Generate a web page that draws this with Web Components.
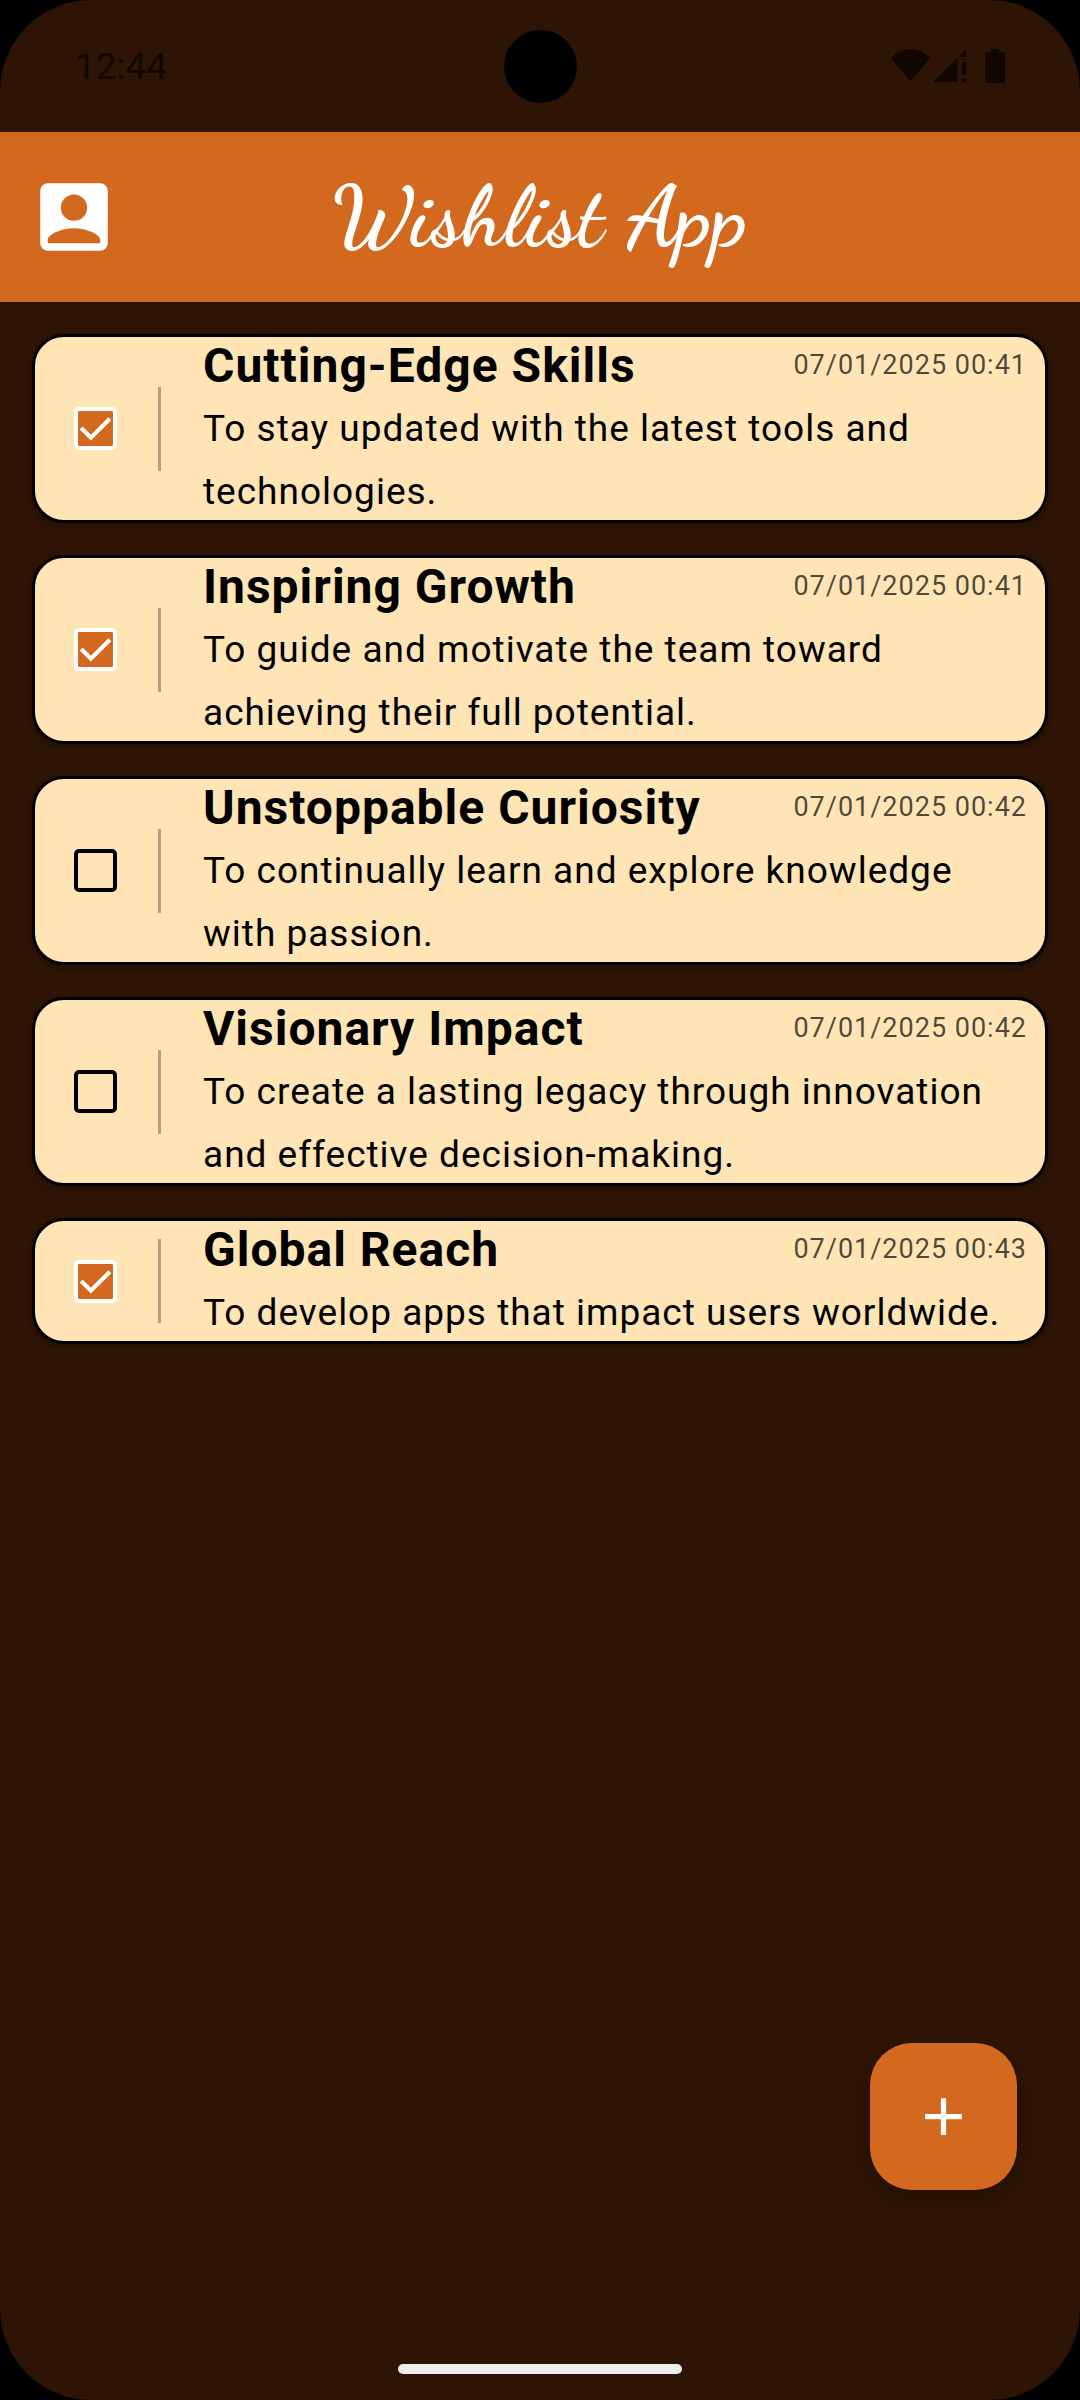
<!DOCTYPE html>
<html lang="en">
<head>
<meta charset="utf-8">
<meta name="viewport" content="width=device-width, initial-scale=1">
<title>Wishlist App</title>
<style>
  :root {
    --bg: #2d1404;
    --accent: #d2691e;
    --card: #ffe4b5;
    --status: #120700;
    --tracking: 1px;
  }
  html { background: #000; }
  body { margin: 0; font-family: Roboto, sans-serif; color: #000; }
</style>
</head>
<body>
<phone-screen>
  <status-bar slot="top">12:44</status-bar>
  <app-header slot="top">Wishlist App</app-header>
  <wish-list>
    <wish-card heading="Cutting-Edge Skills" date="07/01/2025 00:41" checked>To stay updated with the latest tools and technologies.</wish-card>
    <wish-card heading="Inspiring Growth" date="07/01/2025 00:41" checked>To guide and motivate the team toward achieving their full potential.</wish-card>
    <wish-card heading="Unstoppable Curiosity" date="07/01/2025 00:42">To continually learn and explore knowledge with passion.</wish-card>
    <wish-card heading="Visionary Impact" date="07/01/2025 00:42">To create a lasting legacy through innovation and effective decision-making.</wish-card>
    <wish-card heading="Global Reach" date="07/01/2025 00:43" checked>To develop apps that impact users worldwide.</wish-card>
  </wish-list>
  <add-button slot="bottom"></add-button>
  <nav-pill slot="bottom"></nav-pill>
</phone-screen>

<script>
class BaseElement extends HTMLElement {
  connectedCallback() {
    if (this.shadowRoot) return;
    this.attachShadow({ mode: 'open' }).innerHTML = this.render();
  }
}

customElements.define('phone-screen', class extends BaseElement {
  render() {
    return `
      <style>
        :host { display: flex; flex-direction: column; min-height: 100vh; background: var(--bg); border-radius: 91px; overflow: hidden; }
        main { flex: 1; }
        footer { display: flex; flex-direction: column; }
      </style>
      <slot name="top"></slot>
      <main><slot></slot></main>
      <footer><slot name="bottom"></slot></footer>`;
  }
});

customElements.define('status-bar', class extends BaseElement {
  render() {
    return `
      <style>
        :host { display: grid; grid-template-columns: 1fr auto 1fr; align-items: center; height: 132px; padding: 0 75px; color: var(--status); font-size: 37px; box-sizing: border-box; }
        .camera { width: 73px; height: 73px; border-radius: 50%; background: #000; }
        .icons { justify-self: end; display: flex; align-items: center; fill: currentColor; }
        svg { display: block; }
      </style>
      <time><slot></slot></time>
      <span class="camera"></span>
      <span class="icons">
        <svg width="114" height="34" viewBox="0 0 114 34" aria-hidden="true">
          <path d="M0 9 Q9 0 19.500 0 Q30 0 39 9 L19.500 32.500 Z"/>
          <path d="M42 33 L66.500 9 V33 Z M67.500 8 L75 .500 V8 Z M71 13 H75 V26 H71 Z M71 29.500 H75 V33 H71 Z"/>
          <path d="M100 0 H108 V3 H112 Q114 3 114 5 V32 Q114 34 112 34 H96 Q94 34 94 32 V5 Q94 3 96 3 H100 Z"/>
        </svg>
      </span>`;
  }
});

customElements.define('app-header', class extends BaseElement {
  render() {
    return `
      <style>
        :host { display: grid; grid-template-columns: 1fr auto 1fr; align-items: center; height: 170px; padding: 0 29px; background: var(--accent); color: #fff; box-sizing: border-box; }
        button { width: 90px; height: 90px; padding: 0; border: 0; background: none; color: inherit; }
        svg { display: block; width: 90px; height: 90px; fill: currentColor; }
        h1 { margin: 0; font: 700 84px "Dancing Script", cursive; letter-spacing: var(--tracking); white-space: nowrap; }
      </style>
      <button type="button" aria-label="Account">
        <svg viewBox="0 0 24 24" aria-hidden="true"><path fill-rule="evenodd" d="M5 3h14a2 2 0 0 1 2 2v14a2 2 0 0 1-2 2H5a2 2 0 0 1-2-2V5a2 2 0 0 1 2-2zM12 6a3.500 3.500 0 1 0 0 7a3.500 3.500 0 0 0 0-7zM5 18.100C5 16.600 8.800 15 12 15s7 1.600 7 3.100V19H5z"/></svg>
      </button>
      <h1><slot></slot></h1>`;
  }
});

customElements.define('wish-list', class extends BaseElement {
  render() {
    return `
      <style>:host { display: flex; flex-direction: column; gap: 32px; padding: 32px; }</style>
      <slot></slot>`;
  }
});

let nextId = 0;
customElements.define('wish-card', class extends BaseElement {
  render() {
    const id = 'wish' + nextId++;
    return `
      <style>
        :host { display: block; }
        article { display: flex; align-items: center; padding: 0 18px 0 0; border: 3px solid #000; border-radius: 32px; background: var(--card); box-shadow: 0 3px 6px rgba(0,0,0,.2); }
        .tick { display: grid; place-items: center; flex: none; width: 121px; align-self: stretch; }
        .tick > * { grid-area: 1 / 1; }
        input { appearance: none; width: 43px; height: 43px; margin: 0; border: 4px solid #000; border-radius: 5px; }
        input:checked { border-color: #fff; background: var(--accent); background-clip: padding-box; }
        svg { width: 43px; height: 43px; fill: none; stroke: #fff; stroke-width: 4; pointer-events: none; visibility: hidden; }
        input:checked + svg { visibility: visible; }
        .rule { flex: none; width: 3px; height: 84px; margin-left: 2px; background: rgba(0,0,0,.3); }
        .text { flex: 1; min-width: 0; margin: -3px 0 -3px 42px; letter-spacing: var(--tracking); line-height: 63px; }
        .top { display: flex; justify-content: space-between; align-items: center; gap: 16px; }
        h2 { margin: 0; font-size: 48px; font-weight: 700; line-height: inherit; }
        h2 label { display: block; }
        time { font-size: 27px; color: rgba(0,0,0,.7); white-space: nowrap; }
        p { margin: 0; font-size: 37px; }
      </style>
      <article>
        <span class="tick">
          <input type="checkbox" id="${id}"${this.hasAttribute('checked') ? ' checked' : ''}>
          <svg viewBox="0 0 42 42" aria-hidden="true"><path d="M7 20.500 L16.500 30 L35 11.500"/></svg>
        </span>
        <span class="rule"></span>
        <div class="text">
          <div class="top">
            <h2><label for="${id}">${this.getAttribute('heading')}</label></h2>
            <time>${this.getAttribute('date')}</time>
          </div>
          <p><slot></slot></p>
        </div>
      </article>`;
  }
});

customElements.define('add-button', class extends BaseElement {
  render() {
    return `
      <style>
        :host { display: block; align-self: flex-end; padding: 0 63px 147px 0; }
        button { display: grid; place-items: center; width: 147px; height: 147px; padding: 0; border: 0; border-radius: 42px; background: var(--accent); color: #fff; box-shadow: 0 8px 16px rgba(0,0,0,.2); }
        svg { width: 63px; height: 63px; fill: currentColor; }
      </style>
      <button type="button" aria-label="Add wish">
        <svg viewBox="0 0 24 24" aria-hidden="true"><path d="M19 13h-6v6h-2v-6H5v-2h6V5h2v6h6v2z"/></svg>
      </button>`;
  }
});

customElements.define('nav-pill', class extends BaseElement {
  render() {
    return `
      <style>
        :host { display: flex; justify-content: center; padding: 27px 0 26px; }
        span { width: 284px; height: 10px; border-radius: 5px; background: #efeeeb; }
      </style>
      <span></span>`;
  }
});
</script>
</body>
</html>
